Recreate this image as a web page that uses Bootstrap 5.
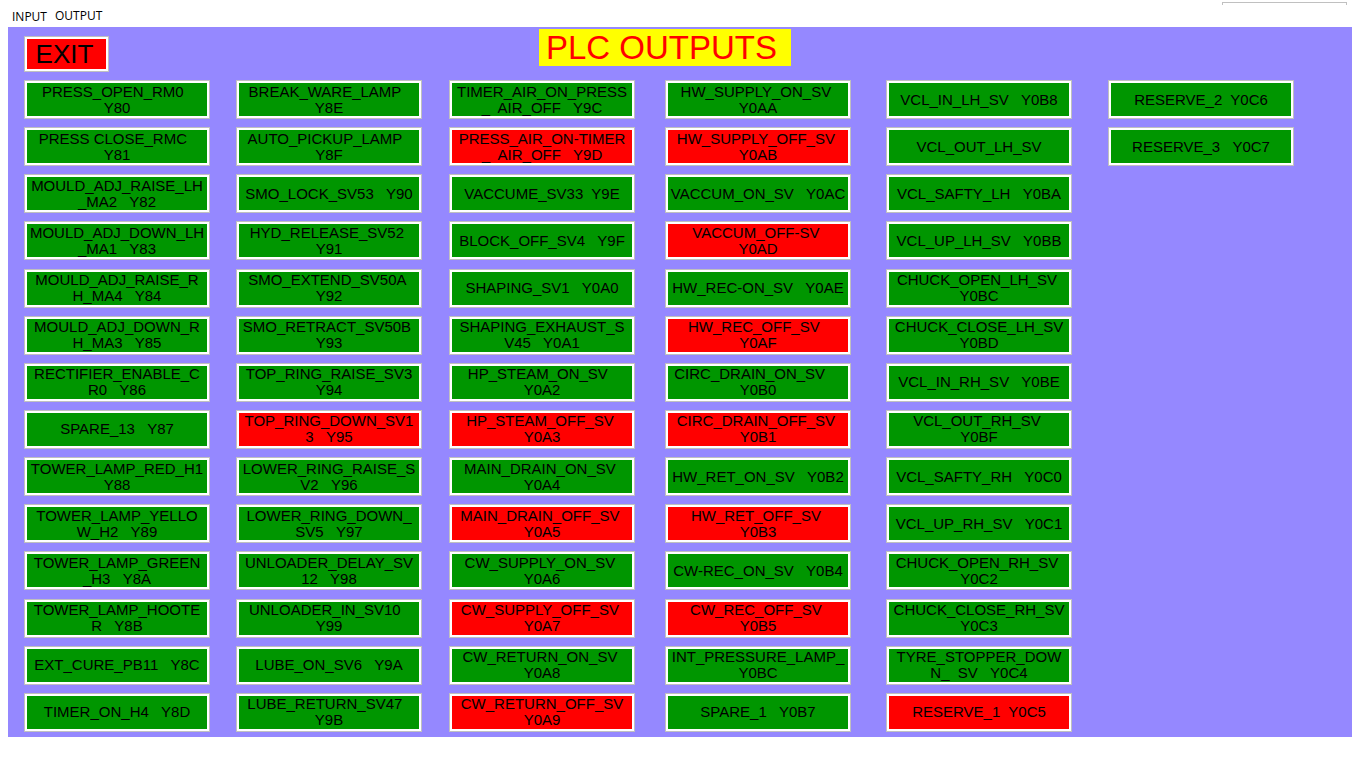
<!DOCTYPE html>
<html lang="en">
<head>
<meta charset="utf-8">
<meta name="viewport" content="width=device-width, initial-scale=1">
<title>PLC Outputs</title>
<link href="https://cdn.jsdelivr.net/npm/bootstrap@5.3.0/dist/css/bootstrap.min.css" rel="stylesheet">
<style>
  body { background: #fff; color: #000; font-family: "Liberation Sans", Arial, sans-serif; }
  .menu-strip { height: 27px; padding: 6px 19px 4px 12px; font: 12px/16px "Open Sans", sans-serif; }
  .menu-strip a { color: #000; text-decoration: none; }
  .panel-stub { width: 125px; height: 3px; margin-top: -4px; border: 1px solid silver; border-bottom: 0; }
  .screen { background: #9588ff; margin: 0 14px 31px 8px; padding: 2px 0 5px 16px; }
  .screen-head { display: grid; grid-template-columns: 1fr auto 1fr; height: 51px; padding-right: 46px; }
  .screen-title { background: #ff0; color: #f00; font-size: 33px; line-height: 37px; padding: 0 14px 0 7px; font-weight: 400; }
  .tile { border: 1px solid silver; border-radius: 0; box-shadow: inset 0 0 0 2px #fff; background: #009600; color: #000; padding: 0; }
  .tile.is-off { background: #f00; }
  .exit-btn { width: 85px; height: 36px; margin-top: 7px; padding-right: 4px; font-size: 26px; line-height: 32px; }
  .outputs { display: grid; grid-auto-flow: column; grid-template-rows: repeat(14, 39px);
    grid-template-columns: 212fr 213fr 216fr 221fr 222fr 244fr; align-content: space-between; row-gap: 8px; }
  .outputs .tile { width: 186px; height: 39px; font-size: 15px; line-height: 16px; white-space: pre; }
</style>
</head>
<body class="d-flex flex-column min-vh-100">
<nav class="menu-strip d-flex align-items-start">
  <a href="#input" class="lh-1 align-self-end">INPUT</a>
  <a href="#output" class="ms-2 lh-1 pt-1">OUTPUT</a>
  <div class="panel-stub ms-auto"></div>
</nav>
<main class="screen flex-grow-1 d-flex flex-column">
  <header class="screen-head align-items-start">
    <button type="button" class="tile is-off exit-btn">EXIT</button>
    <h1 class="screen-title m-0">PLC OUTPUTS</h1>
  </header>
  <section class="outputs flex-grow-1" aria-label="Outputs">
<button type="button" class="tile">PRESS_OPEN_RM0  
Y80</button>
<button type="button" class="tile">PRESS CLOSE_RMC  
Y81</button>
<button type="button" class="tile">MOULD_ADJ_RAISE_LH
_MA2   Y82</button>
<button type="button" class="tile">MOULD_ADJ_DOWN_LH
_MA1   Y83</button>
<button type="button" class="tile">MOULD_ADJ_RAISE_R
H_MA4   Y84</button>
<button type="button" class="tile">MOULD_ADJ_DOWN_R
H_MA3   Y85</button>
<button type="button" class="tile">RECTIFIER_ENABLE_C
R0   Y86</button>
<button type="button" class="tile">SPARE_13   Y87</button>
<button type="button" class="tile">TOWER_LAMP_RED_H1
Y88</button>
<button type="button" class="tile">TOWER_LAMP_YELLO
W_H2   Y89</button>
<button type="button" class="tile">TOWER_LAMP_GREEN
_H3   Y8A</button>
<button type="button" class="tile">TOWER_LAMP_HOOTE
R   Y8B</button>
<button type="button" class="tile">EXT_CURE_PB11   Y8C</button>
<button type="button" class="tile">TIMER_ON_H4   Y8D</button>
<button type="button" class="tile">BREAK_WARE_LAMP  
Y8E</button>
<button type="button" class="tile">AUTO_PICKUP_LAMP  
Y8F</button>
<button type="button" class="tile">SMO_LOCK_SV53   Y90</button>
<button type="button" class="tile">HYD_RELEASE_SV52 
Y91</button>
<button type="button" class="tile">SMO_EXTEND_SV50A 
Y92</button>
<button type="button" class="tile">SMO_RETRACT_SV50B 
Y93</button>
<button type="button" class="tile">TOP_RING_RAISE_SV3
Y94</button>
<button type="button" class="tile is-off">TOP_RING_DOWN_SV1
3   Y95</button>
<button type="button" class="tile">LOWER_RING_RAISE_S
V2   Y96</button>
<button type="button" class="tile">LOWER_RING_DOWN_
SV5   Y97</button>
<button type="button" class="tile">UNLOADER_DELAY_SV
12   Y98</button>
<button type="button" class="tile">UNLOADER_IN_SV10  
Y99</button>
<button type="button" class="tile">LUBE_ON_SV6   Y9A</button>
<button type="button" class="tile">LUBE_RETURN_SV47  
Y9B</button>
<button type="button" class="tile">TIMER_AIR_ON_PRESS
_  AIR_OFF   Y9C</button>
<button type="button" class="tile is-off">PRESS_AIR_ON-TIMER
_  AIR_OFF   Y9D</button>
<button type="button" class="tile">VACCUME_SV33  Y9E</button>
<button type="button" class="tile">BLOCK_OFF_SV4   Y9F</button>
<button type="button" class="tile">SHAPING_SV1   Y0A0</button>
<button type="button" class="tile">SHAPING_EXHAUST_S
V45   Y0A1</button>
<button type="button" class="tile">HP_STEAM_ON_SV  
Y0A2</button>
<button type="button" class="tile is-off">HP_STEAM_OFF_SV 
Y0A3</button>
<button type="button" class="tile">MAIN_DRAIN_ON_SV 
Y0A4</button>
<button type="button" class="tile is-off">MAIN_DRAIN_OFF_SV 
Y0A5</button>
<button type="button" class="tile">CW_SUPPLY_ON_SV 
Y0A6</button>
<button type="button" class="tile is-off">CW_SUPPLY_OFF_SV 
Y0A7</button>
<button type="button" class="tile">CW_RETURN_ON_SV 
Y0A8</button>
<button type="button" class="tile is-off">CW_RETURN_OFF_SV
Y0A9</button>
<button type="button" class="tile">HW_SUPPLY_ON_SV 
Y0AA</button>
<button type="button" class="tile is-off">HW_SUPPLY_OFF_SV 
Y0AB</button>
<button type="button" class="tile">VACCUM_ON_SV   Y0AC</button>
<button type="button" class="tile is-off">VACCUM_OFF-SV 
Y0AD</button>
<button type="button" class="tile">HW_REC-ON_SV   Y0AE</button>
<button type="button" class="tile is-off">HW_REC_OFF_SV  
Y0AF</button>
<button type="button" class="tile">CIRC_DRAIN_ON_SV    
Y0B0</button>
<button type="button" class="tile is-off">CIRC_DRAIN_OFF_SV 
Y0B1</button>
<button type="button" class="tile">HW_RET_ON_SV   Y0B2</button>
<button type="button" class="tile is-off">HW_RET_OFF_SV 
Y0B3</button>
<button type="button" class="tile">CW-REC_ON_SV   Y0B4</button>
<button type="button" class="tile is-off">CW_REC_OFF_SV 
Y0B5</button>
<button type="button" class="tile">INT_PRESSURE_LAMP_
Y0BC</button>
<button type="button" class="tile">SPARE_1   Y0B7</button>
<button type="button" class="tile">VCL_IN_LH_SV   Y0B8</button>
<button type="button" class="tile">VCL_OUT_LH_SV</button>
<button type="button" class="tile">VCL_SAFTY_LH   Y0BA</button>
<button type="button" class="tile">VCL_UP_LH_SV   Y0BB</button>
<button type="button" class="tile">CHUCK_OPEN_LH_SV 
Y0BC</button>
<button type="button" class="tile">CHUCK_CLOSE_LH_SV
Y0BD</button>
<button type="button" class="tile">VCL_IN_RH_SV   Y0BE</button>
<button type="button" class="tile">VCL_OUT_RH_SV 
Y0BF</button>
<button type="button" class="tile">VCL_SAFTY_RH   Y0C0</button>
<button type="button" class="tile">VCL_UP_RH_SV   Y0C1</button>
<button type="button" class="tile">CHUCK_OPEN_RH_SV 
Y0C2</button>
<button type="button" class="tile">CHUCK_CLOSE_RH_SV
Y0C3</button>
<button type="button" class="tile">TYRE_STOPPER_DOW
N_  SV   Y0C4</button>
<button type="button" class="tile is-off">RESERVE_1  Y0C5</button>
<button type="button" class="tile">RESERVE_2  Y0C6</button>
<button type="button" class="tile">RESERVE_3   Y0C7</button>
  </section>
</main>
<script src="https://cdn.jsdelivr.net/npm/bootstrap@5.3.0/dist/js/bootstrap.bundle.min.js"></script>
</body>
</html>
